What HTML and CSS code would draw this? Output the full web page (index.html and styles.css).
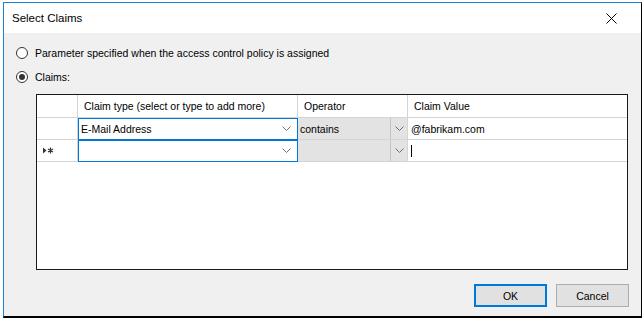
FILE: index.html
```html
<!DOCTYPE html>
<html lang="en">
<head>
    <meta charset="UTF-8">
    <title>Select Claims</title>
    <link rel="stylesheet" href="styles.css">
</head>
<body>
    <div class="window">
        <!-- Title bar -->
        <div class="titlebar">
            <span class="title">Select Claims</span>
            <svg class="close" width="11" height="11" viewBox="0 0 11 11">
                <path d="M0.5 0.5 L10.5 10.5 M10.5 0.5 L0.5 10.5" stroke="#000" stroke-width="1" fill="none"/>
            </svg>
        </div>

        <div class="dialog-body">
            <!-- Options -->
            <div class="radio"><span class="circle"></span>Parameter specified when the access control policy is assigned</div>
            <div class="radio"><span class="circle checked"></span>Claims:</div>

            <!-- Claims grid -->
            <div class="grid">
                <div class="row head">
                    <div class="cell rowhdr"></div>
                    <div class="cell type">Claim type (select or type to add more)</div>
                    <div class="cell op">Operator</div>
                    <div class="cell value">Claim Value</div>
                </div>
                <div class="row">
                    <div class="cell rowhdr"></div>
                    <div class="cell type combo">
                        <span class="txt">E-Mail Address</span>
                        <svg class="chev" width="9" height="5" viewBox="0 0 9 5"><path d="M0.5 0.5 L4.5 4.5 L8.5 0.5" stroke="#707070" fill="none"/></svg>
                    </div>
                    <div class="cell op disabled">
                        <span class="txt">contains</span>
                        <span class="dropbtn"><svg class="chev" width="9" height="5" viewBox="0 0 9 5"><path d="M0.5 0.5 L4.5 4.5 L8.5 0.5" stroke="#707070" fill="none"/></svg></span>
                    </div>
                    <div class="cell value"><span class="txt">@fabrikam.com</span></div>
                </div>
                <div class="row">
                    <div class="cell rowhdr">
                        <svg class="newrow" width="11" height="7" viewBox="0 0 11 7">
                            <path d="M0 0.5 L3.5 3.5 L0 6.5 Z" fill="#333"/>
                            <path d="M7.5 0.5 V6.5 M5 2 L10 5 M10 2 L5 5" stroke="#333" stroke-width="1.2" fill="none"/>
                        </svg>
                    </div>
                    <div class="cell type combo">
                        <span class="txt"></span>
                        <svg class="chev" width="9" height="5" viewBox="0 0 9 5"><path d="M0.5 0.5 L4.5 4.5 L8.5 0.5" stroke="#707070" fill="none"/></svg>
                    </div>
                    <div class="cell op disabled">
                        <span class="txt"></span>
                        <span class="dropbtn"><svg class="chev" width="9" height="5" viewBox="0 0 9 5"><path d="M0.5 0.5 L4.5 4.5 L8.5 0.5" stroke="#707070" fill="none"/></svg></span>
                    </div>
                    <div class="cell value"><span class="caret"></span></div>
                </div>
            </div>

            <!-- Buttons -->
            <div class="actions">
                <button class="btn primary">OK</button>
                <button class="btn">Cancel</button>
            </div>
        </div>
    </div>
</body>
</html>
```

FILE: styles.css
```css
/* Global */
body, html {
    margin: 0;
    padding: 0;
    background: #fff;
    font-family: "Liberation Sans", Arial, sans-serif;
    font-size: 10.5px;
    color: #000;
}

/* Window frame */
.window {
    box-sizing: border-box;
    margin: 2px 0 0 3px;
    width: 639px;
    height: 316px;
    border-top: 1px solid #1883d7;
    border-left: 1px solid #1883d7;
    border-right: 1px solid #000;
    border-bottom: 2px solid #000;
    display: flex;
    flex-direction: column;
}

/* Title bar */
.titlebar {
    height: 30px;
    background: #fff;
    display: flex;
    align-items: center;
    justify-content: space-between;
    padding-left: 8px;
}

.title {
    font-size: 11.5px;
}

.close {
    margin-right: 24px;
}

/* Body */
.dialog-body {
    flex: 1;
    background: #f0f0f0;
    padding-top: 13px;
}

.radio {
    display: flex;
    align-items: center;
    height: 14px;
    padding-left: 12px;
    margin-bottom: 10px;
}

.circle {
    box-sizing: border-box;
    width: 12px;
    height: 12px;
    border: 1px solid #333;
    border-radius: 50%;
    background: #fff;
    margin-right: 7px;
    display: flex;
    align-items: center;
    justify-content: center;
}

.circle.checked::after {
    content: "";
    width: 6px;
    height: 6px;
    border-radius: 50%;
    background: #333;
}

/* Grid */
.grid {
    box-sizing: border-box;
    margin: 0 0 0 32px;
    width: 592px;
    height: 176px;
    border: 1px solid #1a1a1a;
    background: #fff;
}

.row {
    display: grid;
    grid-template-columns: 41px 220px 110px 219px;
    height: 22px;
}

.row.head {
    height: 23px;
}

.cell {
    box-sizing: border-box;
    border-right: 1px solid #d4d4d4;
    border-bottom: 1px solid #d4d4d4;
    display: flex;
    align-items: center;
    padding-left: 3px;
    position: relative;
    white-space: nowrap;
}

.cell.value {
    border-right: none;
}

.head .cell {
    padding-left: 6px;
}

.rowhdr {
    padding-left: 6px;
}

.combo {
    outline: 1px solid #0078d7;
    outline-offset: -1px;
    justify-content: space-between;
    padding-right: 6px;
}

.disabled {
    background: #e3e3e3;
    padding-left: 2px;
    padding-right: 0;
    justify-content: space-between;
}

.dropbtn {
    align-self: stretch;
    width: 16px;
    border-left: 1px solid #c4c4c4;
    display: flex;
    align-items: center;
    justify-content: center;
}

.caret {
    width: 1px;
    height: 12px;
    background: #000;
    margin-left: 0;
}

/* Buttons */
.actions {
    display: flex;
    justify-content: flex-end;
    gap: 9px;
    margin-top: 14px;
    padding-right: 12px;
}

.btn {
    box-sizing: border-box;
    width: 73px;
    height: 23px;
    background: #e1e1e1;
    border: 1px solid #adadad;
    font-family: "Liberation Sans", Arial, sans-serif;
    font-size: 10.5px;
    color: #000;
    padding: 0;
}

.btn.primary {
    border: 2px solid #0078d7;
}
```
